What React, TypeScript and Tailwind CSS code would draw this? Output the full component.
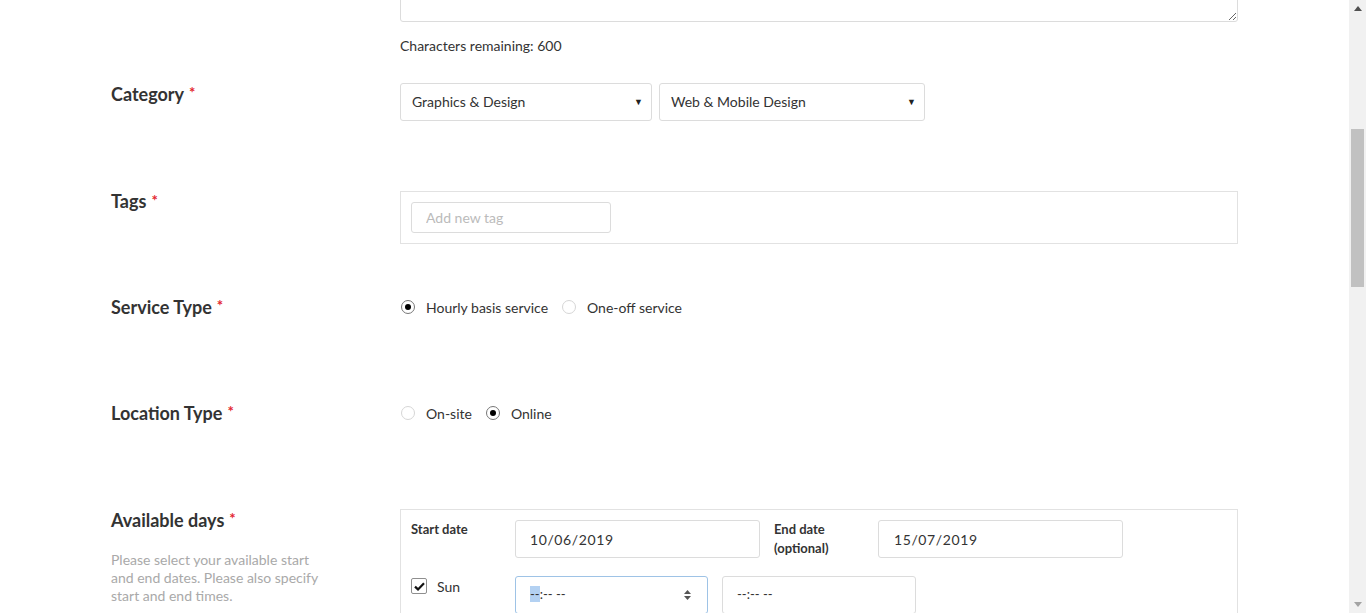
import React from 'react';

function Req() {
  return <span className="ml-[5px] align-top text-[15px] leading-[18px] text-[#e3262f]">*</span>;
}

function Label({ children }: { children: React.ReactNode }) {
  return (
    <div className="w-[289px] shrink-0 text-[18px] font-bold leading-[22px] text-[#333]">
      {children}
      <Req />
    </div>
  );
}

function Select({ value, w }: { value: string; w: string }) {
  return (
    <div className={`${w} flex h-[38px] items-center justify-between rounded-[3px] border border-[#dcdcdc] pb-[1px] pl-[11px] pr-[8px] text-[14px] text-[#333]`}>
      <span>{value}</span>
      <span className="text-[9px] text-[#222]">▼</span>
    </div>
  );
}

function Radio({ checked, label }: { checked?: boolean; label: string }) {
  return (
    <label className="flex items-center gap-[11px] text-[14px] text-[#333]">
      <span
        className={`flex h-[14px] w-[14px] items-center justify-center rounded-full border ${checked ? 'border-[#777]' : 'border-[#d6d6d6]'} bg-white`}
      >
        {checked && <span className="h-[6px] w-[6px] rounded-full bg-black" />}
      </span>
      {label}
    </label>
  );
}

function Scrollbar() {
  return (
    <div className="flex h-[613px] w-[17px] shrink-0 flex-col items-center bg-[#f1f1f1]">
      <div className="flex h-[17px] items-center justify-center">
        <svg width="8" height="5" viewBox="0 0 8 5"><path d="M0 5 L4 0 L8 5 Z" fill="#505050" /></svg>
      </div>
      <div className="mt-[112px] h-[158px] w-[13px] bg-[#c1c1c1]" />
      <div className="flex-1" />
      <div className="flex h-[17px] items-center justify-center">
        <svg width="8" height="5" viewBox="0 0 8 5"><path d="M0 0 L8 0 L4 5 Z" fill="#a3a3a3" /></svg>
      </div>
    </div>
  );
}

export default function App() {
  return (
    <div className="flex h-[613px] w-full overflow-hidden bg-white font-['Lato','Open_Sans',sans-serif] text-[#333]">
      <main className="flex-1 pl-[111px]">
        {/* description textarea tail */}
        <div className="ml-[289px] w-[838px]">
          <textarea readOnly className="mt-[-40px] block h-[62px] w-full rounded-[3px] border border-[#dcdcdc] bg-white" />
          <p className="mt-[14px] text-[14px] leading-[20px] text-[#333]">Characters remaining: 600</p>
        </div>

        {/* Category */}
        <div className="mt-[27px] flex">
          <Label>Category</Label>
          <div className="flex gap-[7px]">
            <Select value="Graphics & Design" w="w-[252px]" />
            <Select value="Web & Mobile Design" w="w-[266px]" />
          </div>
        </div>

        {/* Tags */}
        <div className="mt-[70px] flex">
          <div className="w-[289px] shrink-0 text-[18px] font-bold leading-[20px] text-[#333]">
            Tags
            <Req />
          </div>
          <div className="h-[53px] w-[838px] border border-[#e2e2e2] p-[10px]">
            <input
              readOnly
              placeholder="Add new tag"
              className="h-[31px] w-[200px] rounded-[3px] border border-[#dcdcdc] px-[14px] text-[14px] placeholder:text-[#bbb]"
            />
          </div>
        </div>

        {/* Service Type */}
        <div className="mt-[52px] flex">
          <Label>Service Type</Label>
          <div className="flex h-[22px] items-center gap-[14px] pl-[1px]">
            <Radio checked label="Hourly basis service" />
            <Radio label="One-off service" />
          </div>
        </div>

        {/* Location Type */}
        <div className="mt-[84px] flex">
          <Label>Location Type</Label>
          <div className="flex h-[22px] items-center gap-[14px] pl-[1px]">
            <Radio label="On-site" />
            <Radio checked label="Online" />
          </div>
        </div>

        {/* Available days */}
        <div className="mt-[85px] flex">
          <div className="w-[289px] shrink-0">
            <div className="text-[18px] font-bold leading-[22px] text-[#333]">
              Available days
              <Req />
            </div>
            <p className="mt-[20px] w-[212px] text-[14px] leading-[18px] text-[#a9a9a9]">
              Please select your available start and end dates. Please also specify start and end times.
            </p>
          </div>
          <div className="h-[140px] w-[838px] border border-[#e2e2e2] px-[10px] pt-[10px]">
            <div className="flex">
              <div className="w-[104px] text-[13px] font-bold leading-[19px]">Start date</div>
              <div className="flex h-[38px] w-[245px] items-center rounded-[3px] border border-[#dcdcdc] pl-[14px] text-[14px] tracking-[0.6px]">
                10/06/2019
              </div>
              <div className="ml-[14px] w-[104px] text-[13px] font-bold leading-[19px]">
                End date
                <br />
                (optional)
              </div>
              <div className="flex h-[38px] w-[245px] items-center rounded-[3px] border border-[#dcdcdc] pl-[15px] text-[14px] tracking-[0.6px]">
                15/07/2019
              </div>
            </div>
            <div className="mt-[18px] flex">
              <label className="flex h-[20px] w-[104px] items-center gap-[10px] text-[14px]">
                <span className="flex h-[16px] w-[16px] items-center justify-center rounded-[2px] border border-[#8f8f8f] bg-white">
                  <svg width="11" height="9" viewBox="0 0 11 9">
                    <path d="M1 4.6 L4 7.4 L10 1.2" fill="none" stroke="#111" strokeWidth="2.2" />
                  </svg>
                </span>
                Sun
              </label>
              <div className="flex h-[38px] w-[193px] items-center justify-between rounded-[3px] border border-[#9ec3e6] pl-[14px] pr-[15px] text-[13px]">
                <span>
                  <span className="bg-[#b3d1f2]">--</span>:-- --
                </span>
                <svg width="9" height="12" viewBox="0 0 9 12">
                  <path d="M1 5 L4.5 1 L8 5 Z M1 7 L4.5 11 L8 7 Z" fill="#555" />
                </svg>
              </div>
              <div className="ml-[14px] flex h-[38px] w-[194px] items-center rounded-[3px] border border-[#dcdcdc] pl-[14px] text-[13px]">
                --:-- --
              </div>
            </div>
          </div>
        </div>
      </main>
      <Scrollbar />
    </div>
  );
}
